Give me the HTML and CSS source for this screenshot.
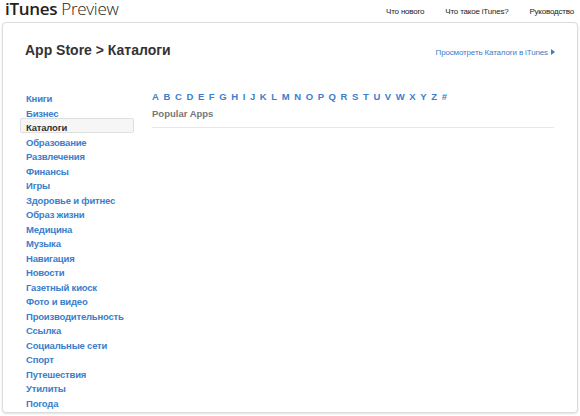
FILE: index.html
```html
<!DOCTYPE html>
<html lang="ru">
<head>
<meta charset="utf-8">
<title>iTunes Preview</title>
<link rel="stylesheet" href="styles.css">
</head>
<body>
<header class="top">
  <div class="logo"><span class="logo-bold">iTunes</span> <span class="logo-light">Preview</span></div>
  <nav class="topnav">
    <a href="#">Что нового</a>
    <a href="#">Что такое iTunes?</a>
    <a href="#">Руководство</a>
  </nav>
</header>
<main class="card">
  <div class="card-head">
    <h1 class="title">App Store &gt; Каталоги</h1>
    <a class="view-link" href="#">Просмотреть Каталоги в iTunes <span class="tri"></span></a>
  </div>
  <div class="card-body">
    <ul class="sidebar">
      <li><a href="#">Книги</a></li>
      <li><a href="#">Бизнес</a></li>
      <li class="active"><a href="#">Каталоги</a></li>
      <li><a href="#">Образование</a></li>
      <li><a href="#">Развлечения</a></li>
      <li><a href="#">Финансы</a></li>
      <li><a href="#">Игры</a></li>
      <li><a href="#">Здоровье и фитнес</a></li>
      <li><a href="#">Образ жизни</a></li>
      <li><a href="#">Медицина</a></li>
      <li><a href="#">Музыка</a></li>
      <li><a href="#">Навигация</a></li>
      <li><a href="#">Новости</a></li>
      <li><a href="#">Газетный киоск</a></li>
      <li><a href="#">Фото и видео</a></li>
      <li><a href="#">Производительность</a></li>
      <li><a href="#">Ссылка</a></li>
      <li><a href="#">Социальные сети</a></li>
      <li><a href="#">Спорт</a></li>
      <li><a href="#">Путешествия</a></li>
      <li><a href="#">Утилиты</a></li>
      <li><a href="#">Погода</a></li>
    </ul>
    <section class="content">
      <div class="alpha">
        <a href="#">A</a><a href="#">B</a><a href="#">C</a><a href="#">D</a><a href="#">E</a><a href="#">F</a><a href="#">G</a><a href="#">H</a><a href="#">I</a><a href="#">J</a><a href="#">K</a><a href="#">L</a><a href="#">M</a><a href="#">N</a><a href="#">O</a><a href="#">P</a><a href="#">Q</a><a href="#">R</a><a href="#">S</a><a href="#">T</a><a href="#">U</a><a href="#">V</a><a href="#">W</a><a href="#">X</a><a href="#">Y</a><a href="#">Z</a><a href="#">#</a>
      </div>
      <h2 class="popular">Popular Apps</h2>
    </section>
  </div>
</main>
</body>
</html>
```
FILE: styles.css
```css
* { box-sizing: border-box; }
html, body { margin: 0; padding: 0; background: #fff; }
body {
  font-family: "Liberation Sans", Arial, sans-serif;
  width: 580px;
  height: 416px;
  overflow: hidden;
}
a { text-decoration: none; }

.top {
  height: 22px;
  display: flex;
  justify-content: space-between;
  align-items: flex-start;
  padding: 0 6px 0 5px;
}
.logo {
  font-family: "Open Sans", sans-serif;
  font-size: 17px;
  line-height: 18px;
  margin-top: 0;
  color: #222;
  letter-spacing: -0.3px;
}
.logo-bold { font-weight: 600; }
.logo-light { font-weight: 300; }
.topnav {
  display: flex;
  gap: 21px;
  padding-top: 7px;
}
.topnav a {
  font-size: 8px;
  letter-spacing: -0.2px;
  color: #222;
}

.card {
  margin: 0 2px;
  height: 391px;
  border: 1px solid #dcdcdc;
  border-radius: 4px;
  box-shadow: 0 1px 2px rgba(0,0,0,0.12);
  background: #fff;
}
.card-head {
  display: flex;
  justify-content: space-between;
  align-items: baseline;
  padding: 19px 22px 0 22px;
}
.title {
  margin: 0;
  font-size: 14px;
  font-weight: bold;
  color: #333;
}
.view-link {
  font-size: 8px;
  letter-spacing: -0.15px;
  color: #3a7ecc;
}
.tri {
  display: inline-block;
  width: 0; height: 0;
  border-left: 4px solid #3a7ecc;
  border-top: 3px solid transparent;
  border-bottom: 3px solid transparent;
  margin-left: 1px;
}

.card-body {
  display: flex;
  padding: 31px 23px 0 17px;
}
.sidebar {
  list-style: none;
  margin: 0;
  padding: 0;
  width: 114px;
}
.sidebar li {
  height: 14.5px;
  line-height: 13px;
  border: 1px solid transparent;
  border-radius: 2px;
  padding-left: 5px;
}
.sidebar a {
  font-size: 9.5px;
  letter-spacing: -0.2px;
  font-weight: bold;
  color: #3a7ecc;
  white-space: nowrap;
}
.sidebar li.active {
  background: #f6f6f6;
  border-color: #e0e0e0;
}
.sidebar li.active a { color: #333; }

.content {
  flex: 1;
  margin-left: 18px;
}
.alpha {
  display: flex;
  gap: 4.6px;
  height: 16px;
  line-height: 16px;
}
.alpha a {
  font-size: 9.5px;
  font-weight: bold;
  color: #3a7ecc;
}
.popular {
  margin: 2px 0 0 0;
  padding-bottom: 6px;
  font-size: 9.5px;
  font-weight: bold;
  color: #777;
  border-bottom: 1px solid #e8e8e8;
  line-height: 14px;
}
```
